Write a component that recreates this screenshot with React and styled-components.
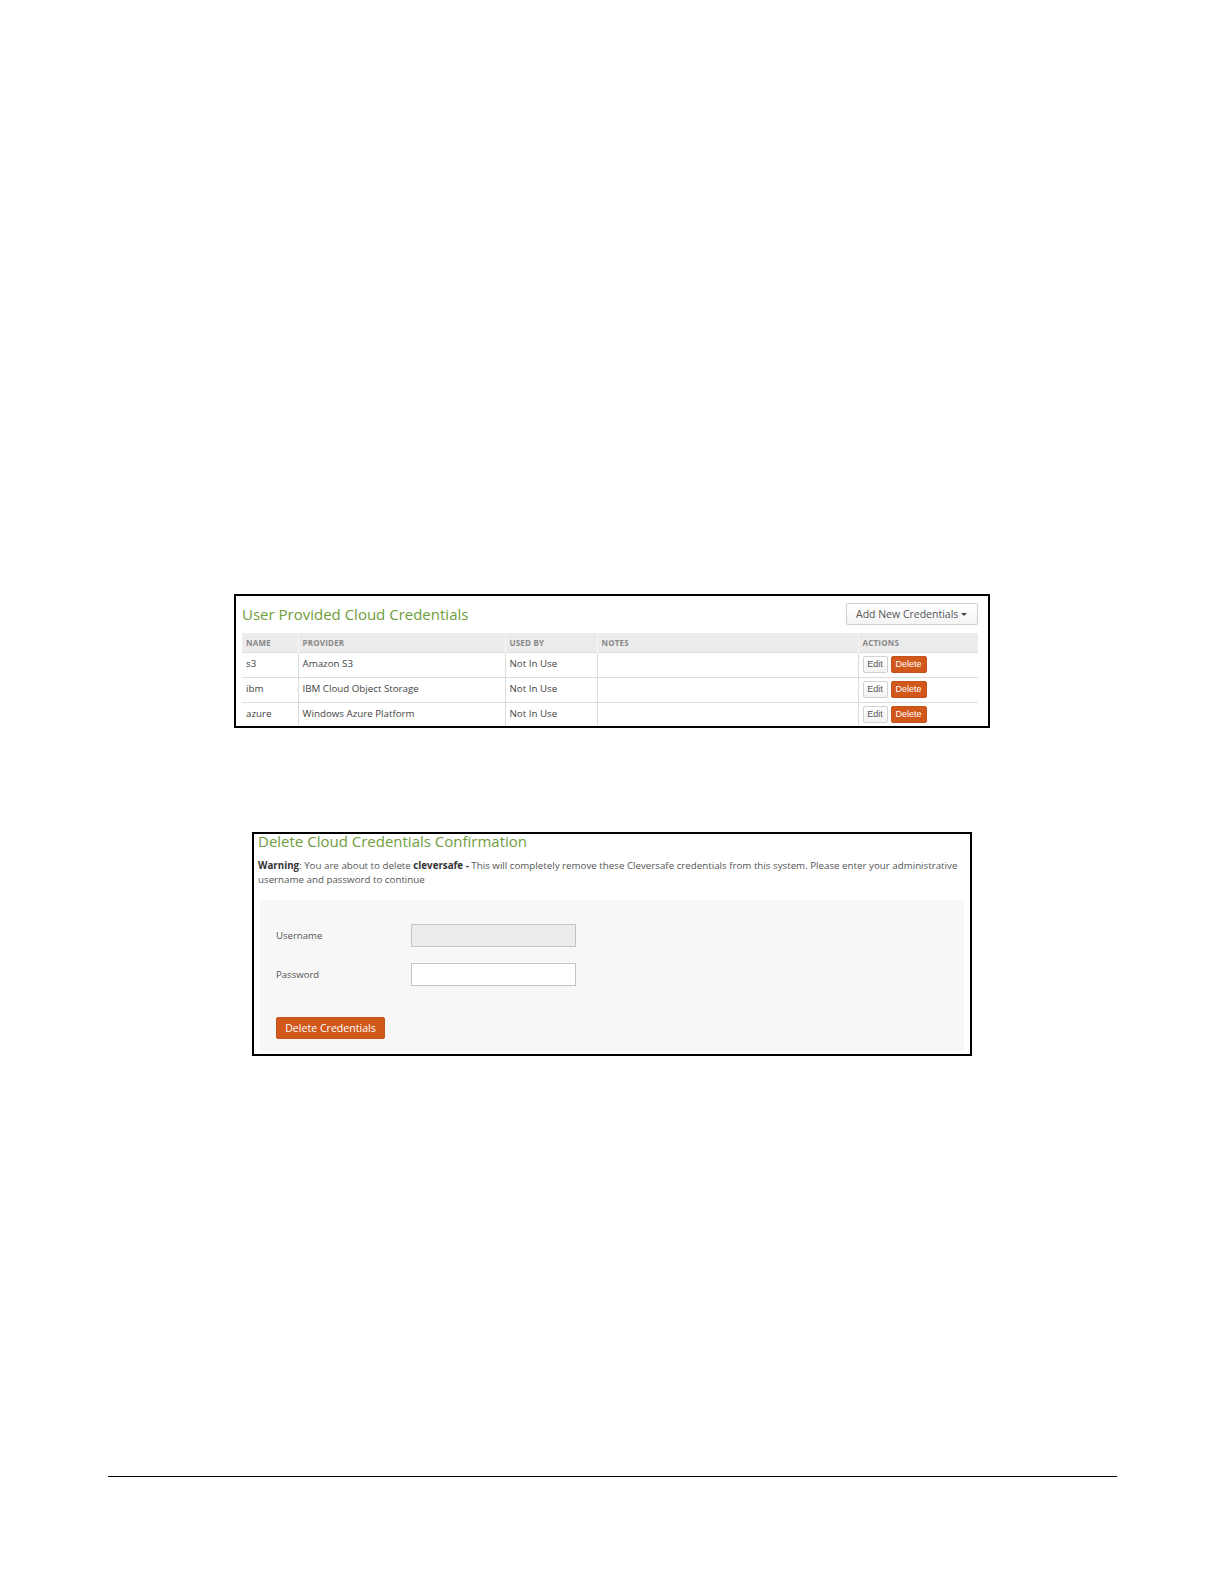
import styled, { createGlobalStyle } from "styled-components";

const GlobalStyle = createGlobalStyle`
  html, body {
    margin: 0;
    padding: 0;
    background: #ffffff;
  }
  body {
    font-family: "Open Sans", "Liberation Sans", sans-serif;
    color: #444;
  }
`;

const credentials = [
  { name: "s3", provider: "Amazon S3", usedBy: "Not In Use", notes: "" },
  { name: "ibm", provider: "IBM Cloud Object Storage", usedBy: "Not In Use", notes: "" },
  { name: "azure", provider: "Windows Azure Platform", usedBy: "Not In Use", notes: "" },
];

const columns = [
  { label: "Name", width: 56 },
  { label: "Provider", width: 207 },
  { label: "Used By", width: 92 },
  { label: "Notes", width: 261 },
  { label: "Actions", width: 120 },
];

const Page = styled.div`
  width: 1224px;
  min-height: 1584px;
  box-sizing: border-box;
  padding-top: 594px;
  background: #fff;
`;

const Frame = styled.section`
  box-sizing: border-box;
  margin-left: ${(p) => p.$left}px;
  margin-top: ${(p) => p.$top || 0}px;
  width: ${(p) => p.$width}px;
  height: ${(p) => p.$height}px;
  border: 2px solid #000;
  overflow: hidden;
  background: #fff;
`;

const ListBody = styled.div`
  padding: 7px 10px 0 6px;
`;

const ListHeader = styled.div`
  display: flex;
  align-items: center;
  justify-content: space-between;
  height: 22px;
  margin-bottom: 8px;
`;

const Title = styled.h2`
  margin: ${(p) => p.$lift || 0}px 0 0 0;
  padding: 0 0 1px ${(p) => p.$indent || 0}px;
  font-size: 15px;
  font-weight: 400;
  line-height: 18px;
  color: #6f9c3a;
`;

const DropButton = styled.button`
  display: flex;
  align-items: center;
  gap: 3px;
  box-sizing: border-box;
  height: 22px;
  width: 132px;
  padding: 0 0 0 9px;
  border: 1px solid #cfcfcf;
  border-radius: 2px;
  background: linear-gradient(#ffffff, #f4f4f4);
  font-family: "Open Sans", "Liberation Sans", sans-serif;
  font-size: 10.5px;
  color: #555;
  cursor: pointer;
`;

const Caret = styled.span`
  width: 0;
  height: 0;
  border-left: 3px solid transparent;
  border-right: 3px solid transparent;
  border-top: 3px solid #444;
  margin-top: 1px;
`;

const Table = styled.table`
  width: 736px;
  table-layout: fixed;
  border-collapse: collapse;
`;

const HeadCell = styled.th`
  height: 18px;
  padding: 0 4px 1px;
  background: #ececec;
  border-left: 1px solid #f6f6f6;
  text-align: left;
  font-size: 8px;
  font-weight: 700;
  text-transform: uppercase;
  letter-spacing: 0.2px;
  color: #888;
  &:first-child {
    border-left: none;
  }
`;

const Cell = styled.td`
  height: 22px;
  padding: 0 4px 2px;
  border-top: 1px solid #dcdcdc;
  border-left: 1px solid #dcdcdc;
  font-size: 9.75px;
  line-height: 14px;
  color: #444;
  white-space: nowrap;
  &:first-child {
    border-left: none;
  }
`;

const Actions = styled.div`
  display: flex;
  gap: 3px;
  align-items: center;
`;

const SmallButton = styled.button`
  box-sizing: border-box;
  height: 17px;
  width: ${(p) => (p.$danger ? 36 : 25)}px;
  padding: 0;
  border-radius: 2px;
  border: 1px solid ${(p) => (p.$danger ? "#c5521a" : "#d2d2d2")};
  background: ${(p) => (p.$danger ? "#d2571b" : "linear-gradient(#ffffff, #f3f3f3)")};
  color: ${(p) => (p.$danger ? "#fff" : "#555")};
  font-family: "Liberation Sans", "Open Sans", sans-serif;
  font-size: 9px;
  cursor: pointer;
`;

const ConfirmBody = styled.div`
  padding: 0 6px 0 2px;
`;

const Warning = styled.p`
  margin: 8px 0 13px 2px;
  font-size: 9.75px;
  line-height: 14px;
  color: #555;
  b {
    color: #333;
    font-weight: 700;
  }
`;

const Well = styled.div`
  box-sizing: border-box;
  margin-left: 4px;
  height: 151px;
  padding: 24px 16px 0 16px;
  background: #f7f7f7;
`;

const FieldRow = styled.div`
  display: flex;
  align-items: center;
  margin-bottom: 16px;
`;

const Label = styled.label`
  width: 135px;
  font-size: 9.6px;
  color: #555;
`;

const Input = styled.input`
  box-sizing: border-box;
  width: 165px;
  height: 23px;
  border: 1px solid #c4c4c4;
  background: ${(p) => (p.disabled ? "#ececec" : "#fff")};
  padding: 0 6px;
  font-family: "Open Sans", "Liberation Sans", sans-serif;
  font-size: 10px;
`;

const DangerButton = styled.button`
  box-sizing: border-box;
  margin-top: 15px;
  height: 22px;
  width: 109px;
  padding: 0;
  border: 1px solid #c4521a;
  border-radius: 2px;
  background: #d2571b;
  color: #fff;
  font-family: "Open Sans", "Liberation Sans", sans-serif;
  font-size: 10.6px;
  cursor: pointer;
`;

const Rule = styled.hr`
  margin: 420px 0 0 108px;
  width: 1009px;
  height: 0;
  border: none;
  border-top: 1px solid #000;
`;

export default function App() {
  return (
    <>
      <GlobalStyle />
      <Page>
        <Frame $left={234} $width={756} $height={134}>
          <ListBody>
            <ListHeader>
              <Title>User Provided Cloud Credentials</Title>
              <DropButton>
                Add New Credentials <Caret />
              </DropButton>
            </ListHeader>
            <Table>
              <colgroup>
                {columns.map((c) => (
                  <col key={c.label} style={{ width: c.width }} />
                ))}
              </colgroup>
              <thead>
                <tr>
                  {columns.map((c) => (
                    <HeadCell key={c.label}>{c.label}</HeadCell>
                  ))}
                </tr>
              </thead>
              <tbody>
                {credentials.map((row) => (
                  <tr key={row.name}>
                    <Cell>{row.name}</Cell>
                    <Cell>{row.provider}</Cell>
                    <Cell>{row.usedBy}</Cell>
                    <Cell>{row.notes}</Cell>
                    <Cell>
                      <Actions>
                        <SmallButton>Edit</SmallButton>
                        <SmallButton $danger>Delete</SmallButton>
                      </Actions>
                    </Cell>
                  </tr>
                ))}
              </tbody>
            </Table>
          </ListBody>
        </Frame>

        <Frame $left={252} $top={104} $width={720} $height={224}>
          <ConfirmBody>
            <Title $indent={2} $lift={-2}>Delete Cloud Credentials Confirmation</Title>
            <Warning>
              <b>Warning</b>: You are about to delete <b>cleversafe -</b> This will completely
              remove these Cleversafe credentials from this system. Please enter your
              administrative username and password to continue
            </Warning>
            <Well>
              <FieldRow>
                <Label>Username</Label>
                <Input disabled />
              </FieldRow>
              <FieldRow>
                <Label>Password</Label>
                <Input type="password" />
              </FieldRow>
              <DangerButton>Delete Credentials</DangerButton>
            </Well>
          </ConfirmBody>
        </Frame>

        <Rule />
      </Page>
    </>
  );
}
